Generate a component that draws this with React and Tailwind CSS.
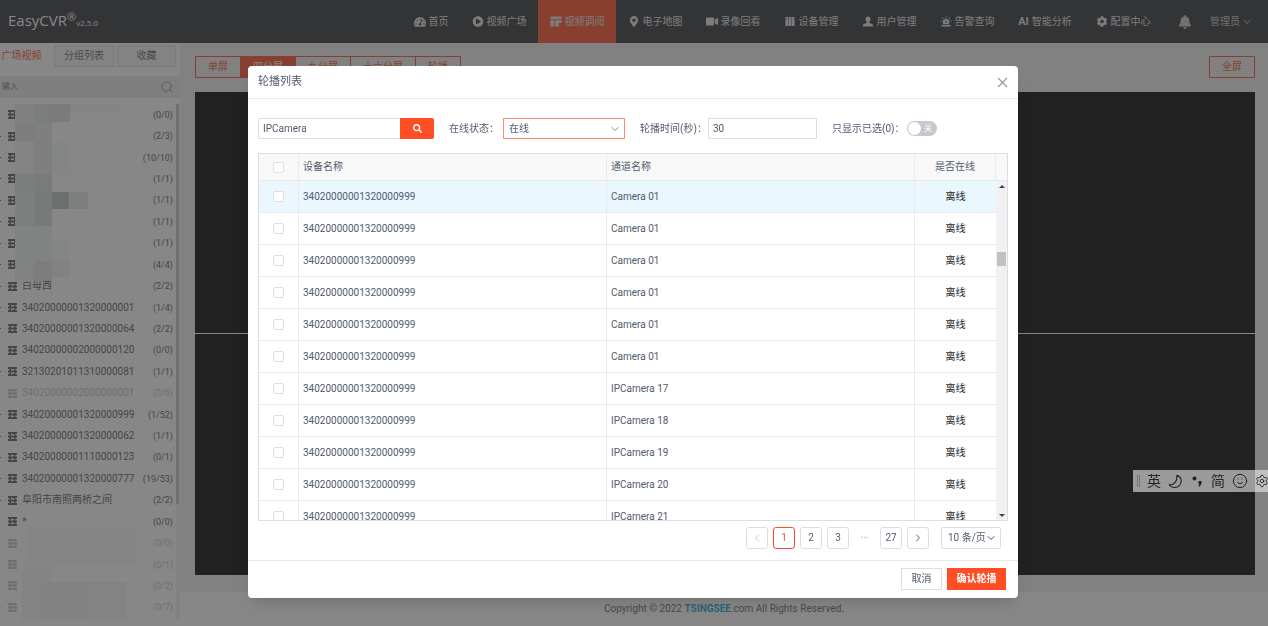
import React, { useState } from 'react';
import { FaTachometerAlt, FaPlayCircle, FaMapMarkerAlt, FaVideo, FaCog, FaBell, FaSearch } from 'react-icons/fa';
import { ChevronDown, ChevronLeft, ChevronRight, Search, X, Smile, Settings } from 'lucide-react';

const LayoutIcon = (props) => (
  <svg viewBox="0 0 12 12" fill="currentColor" {...props}>
    <path d="M0 0.5h12v3H0zM0 4.5h4v7H0zM5 4.5h7v3H9v4H5z" />
  </svg>
);

const DevicesIcon = (props) => (
  <svg viewBox="0 0 12 12" fill="currentColor" {...props}>
    <path d="M1 1h3v10H1zM4.5 1h3v10h-3zM8 1h3v10H8z" />
    <path d="M2 3h1M5.5 3h1M9 3h1" stroke="#2d3035" strokeWidth="1" />
  </svg>
);

const PersonIcon = (props) => (
  <svg viewBox="0 0 12 12" fill="currentColor" {...props}>
    <path d="M6 .5c1.7 0 2.7 1.2 2.7 2.9 0 1.300-.6 2.500-1.400 3.100v.8l3.300 1.300c.6.300.9.800.9 1.400v1.500H.5V10c0-.6.300-1.100.9-1.400l3.300-1.300v-.8C3.900 5.900 3.300 4.700 3.300 3.400 3.300 1.700 4.300.5 6 .5z" />
  </svg>
);

const SirenIcon = (props) => (
  <svg viewBox="0 0 12 12" fill="currentColor" {...props}>
    <path d="M2.500 9V6.500a3.500 3.500 0 0 1 7 0V9zM1 9.800h10v1.700H1zM5.500.5h1v1.700h-1zM1.400 2l.8-.7 1.200 1.200-.7.800zM10.600 2l-.8-.7-1.200 1.200.7.800zM0 5h1.500v1H0zM10.500 5H12v1h-1.500z" />
    <path d="M6 5v2.500" stroke="#2d3035" strokeWidth="1" />
  </svg>
);

const AiIcon = () => <span className="text-[11px] font-bold">AI</span>;

const DeviceIcon = () => (
  <svg viewBox="0 0 9 9" className="h-[9px] w-[9px] shrink-0" fill="currentColor" aria-hidden="true">
    <path d="M0 0h9v2H0zM0 3.500h9v2H0zM0 7h9v2H0zM1.500 0h1.500v9H1.500zM6 0h1.500v9H6z" />
  </svg>
);

const CrescentIcon = () => (
  <svg viewBox="0 0 16 16" className="h-[15px] w-[15px]" fill="none" stroke="currentColor" strokeWidth="1.2" strokeLinejoin="round" aria-hidden="true">
    <path d="M9.500 1.500c3 1 4.800 3.500 4.600 6.500-.3 3.800-3.400 6.500-7 6.400-2.500 0-4.600-1.200-5.800-3 5.200.6 9-3.900 8.200-9.900z" />
  </svg>
);

const PunctuationIcon = () => (
  <svg viewBox="0 0 14 14" className="h-[14px] w-[14px]" fill="currentColor" aria-hidden="true">
    <circle cx="4.500" cy="4.500" r="2" />
    <path d="M8.500 7h3v2.500L9.800 12.500H8.300L9.300 9.700h-.8z" />
  </svg>
);

const navItems = [
  { label: '视频广场', icon: FaPlayCircle },
  { label: '视频调阅', icon: LayoutIcon, active: true },
  { label: '电子地图', icon: FaMapMarkerAlt },
  { label: '录像回看', icon: FaVideo },
  { label: '设备管理', icon: DevicesIcon },
  { label: '用户管理', icon: PersonIcon },
  { label: '告警查询', icon: SirenIcon },
  { label: '智能分析', icon: AiIcon },
  { label: '配置中心', icon: FaCog },
];

const devices = [
  { name: '', count: '0/0', leaf: true },
  { name: '', count: '2/3' },
  { name: '', count: '10/10' },
  { name: '', count: '1/1' },
  { name: '', count: '1/1' },
  { name: '', count: '1/1' },
  { name: '', count: '1/1' },
  { name: '', count: '4/4' },
  { name: '白母西', count: '2/2' },
  { name: '34020000001320000001', count: '1/4' },
  { name: '34020000001320000064', count: '2/2' },
  { name: '34020000002000000120', count: '0/0', leaf: true },
  { name: '32130201011310000081', count: '1/1' },
  { name: '34020000002000000001', count: '0/6', offline: true },
  { name: '34020000001320000999', count: '1/52' },
  { name: '34020000001320000062', count: '1/1' },
  { name: '34020000001110000123', count: '0/1' },
  { name: '34020000001320000777', count: '19/53' },
  { name: '阜阳市南照两桥之间', count: '2/2' },
  { name: '*', count: '0/0', leaf: true },
  { name: '', count: '0/0', offline: true, leaf: true },
  { name: '', count: '0/1', offline: true },
  { name: '', count: '0/2', offline: true },
  { name: '', count: '0/7', offline: true },
];

// x, y, width, height, colour of each masked block over the device names
const maskBlocks = [
  [15, 0, 20, 20, '#eaeded'],
  [35, 0, 17, 20, '#e2e5e5'],
  [52, 0, 18, 18, '#dde3e2'],
  [70, 0, 50, 8, '#f6f6f6'],
  [15, 20, 19, 17, '#e5e7e7'],
  [34, 20, 18, 50, '#e9ebeb'],
  [15, 37, 19, 33, '#f4f6f6'],
  [52, 37, 18, 33, '#f8f9f9'],
  [15, 70, 20, 18, '#dfe5e4'],
  [35, 70, 17, 18, '#dbe2e1'],
  [15, 88, 20, 34, '#e1eae9'],
  [35, 88, 17, 34, '#dadddd'],
  [52, 88, 17, 17, '#bdc3c2'],
  [69, 88, 19, 17, '#e9edec'],
  [15, 122, 37, 35, '#f0f4f3'],
  [52, 135, 18, 22, '#f8f9f9'],
  [15, 157, 20, 20, '#eef0f0'],
  [35, 157, 17, 20, '#e5e6e6'],
  [52, 157, 18, 16, '#f1f2f2'],
  [28, 424, 108, 36, '#f9f9f9'],
  [22, 462, 30, 16, '#f7f7f7'],
  [22, 478, 105, 38, '#f6f6f6'],
  [40, 478, 48, 38, '#f2f2f2'],
];

const channels = [
  'Camera 01',
  'Camera 01',
  'Camera 01',
  'Camera 01',
  'Camera 01',
  'Camera 01',
  'IPCamera 17',
  'IPCamera 18',
  'IPCamera 19',
  'IPCamera 20',
  'IPCamera 21',
];

const Header = () => (
  <header className="flex h-[43px] items-center justify-between bg-[#2d3035] pl-2 pr-[15px] text-[#e4e4e4]">
    <div className="flex items-baseline font-['Open_Sans',sans-serif] text-white">
      <span className="text-[15px]">EasyCVR</span>
      <sup className="text-[11px]">®</sup>
      <span className="text-[8px]">v2.5.0</span>
    </div>
    <div className="flex h-full items-center">
      <nav className="flex h-full">
        <a href="#home" className="flex h-full w-[58px] items-center justify-center gap-[3px]">
          <FaTachometerAlt className="h-3 w-3" />
          首页
        </a>
        {navItems.map(({ label, icon: Icon, active }) => (
          <a
            key={label}
            href={`#${label}`}
            className={`flex h-full w-[78px] items-center justify-center gap-[3px] whitespace-nowrap ${active ? 'bg-[#ff4e24]' : ''}`}
          >
            <Icon className="h-[11px] w-3" />
            {label}
          </a>
        ))}
      </nav>
      <button aria-label="通知" className="ml-4 text-[#c8c8c8]">
        <FaBell className="h-[14px] w-[14px]" />
      </button>
      <button className="ml-[18px] flex items-center gap-px text-[#c8c8c8]">
        管理员
        <ChevronDown className="h-3 w-3" />
      </button>
    </div>
  </header>
);

const Sidebar = () => (
  <aside className="flex w-[180px] shrink-0 flex-col bg-white">
    <div className="flex h-[33px] items-start gap-[3px] pt-[2px]">
      <button className="h-[22px] w-[51px] whitespace-nowrap pr-2 text-[#ff4e24]">广场视频</button>
      <button className="h-[22px] w-[60px] border border-[#dcdcdc] bg-[#f5f5f5] text-[#666]">分组列表</button>
      <button className="h-[22px] w-[59px] border border-[#dcdcdc] bg-[#f5f5f5] text-[#666]">收藏</button>
    </div>
    <label className="flex h-[22px] items-center bg-[#eaeaea] pl-[2px] pr-[6px]">
      <input placeholder="输入" aria-label="输入" className="w-full min-w-0 flex-1 bg-transparent text-[8px] outline-none placeholder:text-[#777]" />
      <Search className="h-[14px] w-[14px] text-[#888]" strokeWidth={1.5} />
    </label>
    <div className="relative mt-[6px] flex flex-1 pb-2">
      <ul className="flex min-w-0 flex-1 flex-col">
        {devices.map((device, i) => (
          <li
            key={i}
            className={`flex flex-1 items-center pr-[3px] ${device.offline ? 'text-[#c2c4c8]' : 'text-[#555a62]'}`}
          >
            <span className={`mr-[7px] h-px w-px shrink-0 ${device.leaf ? '' : 'bg-current'}`} />
            <DeviceIcon />
            <span className="ml-[5px] flex-1 whitespace-nowrap">{device.name}</span>
            <span className="text-[9px]">({device.count})</span>
          </li>
        ))}
      </ul>
      <div className="w-1 bg-[#f0f0f0]">
        <div className="h-[400px] w-[3px] bg-[#c4c4c4]" />
      </div>
      <svg className="pointer-events-none absolute left-0 top-0 h-[516px] w-[176px]" aria-hidden="true">
        {maskBlocks.map(([x, y, w, h, fill], i) => (
          <rect key={i} x={x} y={y} width={w} height={h} fill={fill} />
        ))}
      </svg>
    </div>
  </aside>
);

const Wall = () => {
  const layouts = ['单屏', '四分屏', '九分屏', '十六分屏', '轮播'];
  return (
    <main className="flex min-w-0 flex-1 flex-col bg-[#f0f0f0]">
      <div className="flex flex-1 flex-col pb-[17px] pl-[15px] pr-[13px] pt-[13px]">
        <div className="flex h-[22px] justify-between text-[#ff4e24]">
          <div className="flex">
            {layouts.map((name, i) => (
              <button
                key={name}
                className={`border-y border-r border-[#ff4e24] px-[12px] first:border-l ${i === 1 ? 'bg-[#ff4e24] text-white' : ''}`}
              >
                {name}
              </button>
            ))}
          </div>
          <button className="border border-[#ff4e24] px-3">全屏</button>
        </div>
        <div className="mt-[14px] grid flex-1 grid-cols-2 grid-rows-2 gap-px bg-white">
          <div className="bg-black" />
          <div className="bg-black" />
          <div className="bg-black" />
          <div className="bg-black" />
        </div>
      </div>
      <footer className="h-[34px] bg-white text-center leading-[33px] text-[#666]">
        Copyright © 2022 <a href="#tsingsee" className="font-bold text-[#18a8d8]">TSINGSEE</a>.com All Rights Reserved.
      </footer>
    </main>
  );
};

const Checkbox = (props) => (
  <input
    type="checkbox"
    className="mx-auto block h-[11px] w-[11px] appearance-none rounded-[2px] border border-[#dcdee2] bg-white checked:bg-[#ff4e24]"
    {...props}
  />
);

const ChannelTable = () => (
  <div className="mt-[14px] flex h-[368px] border border-[#dcdee2]">
    <div className="min-w-0 flex-1 overflow-y-auto [scrollbar-width:none]">
      <table className="w-full table-fixed border-separate border-spacing-0 text-left">
        <colgroup>
          <col className="w-[40px]" />
          <col />
          <col />
          <col className="w-[81px]" />
        </colgroup>
        <thead className="sticky top-0 z-10 bg-[#f8f8f9]">
          <tr className="h-[27px] [&>th]:border-b [&>th]:border-r [&>th]:border-[#e8eaec] [&>th]:font-normal">
            <th><Checkbox aria-label="全选" /></th>
            <th className="pl-1">设备名称</th>
            <th className="pl-1">通道名称</th>
            <th className="text-center">是否在线</th>
          </tr>
        </thead>
        <tbody>
          {channels.map((channel, i) => (
            <tr
              key={i}
              className={`h-8 [&>td]:border-b [&>td]:border-[#e8eaec] [&>td:not(:last-child)]:border-r ${i === 0 ? 'bg-[#ebf7ff]' : 'bg-white'}`}
            >
              <td><Checkbox aria-label={`选择 ${channel}`} /></td>
              <td className="pl-1">34020000001320000999</td>
              <td className="pl-1">{channel}</td>
              <td className="text-center text-[#222]">离线</td>
            </tr>
          ))}
        </tbody>
      </table>
    </div>
    <div className="flex w-[11px] flex-col items-center bg-[#f1f1f3]">
      <div className="h-[27px] w-full border-b border-[#e8eaec] bg-[#f8f8f9]" />
      <div className="mt-1 h-0 w-0 border-x-[3px] border-b-[3px] border-x-transparent border-b-[#444]" />
      <div className="mt-[64px] h-[14px] w-[9px] bg-[#c1c1c4]" />
      <div className="mb-[3px] mt-auto h-0 w-0 border-x-[3px] border-t-[3px] border-x-transparent border-t-[#444]" />
    </div>
  </div>
);

const Pagination = () => {
  const box = 'flex h-[22px] w-[22px] items-center justify-center rounded-[3px] border';
  return (
    <div className="mt-[6px] flex items-center justify-end gap-[5px] pr-[7px]">
      <button aria-label="上一页" disabled className={`${box} border-[#dcdee2] text-[#c5c8ce]`}>
        <ChevronLeft className="h-3 w-3" />
      </button>
      <button className={`${box} border-[#ff4e24] text-[#ff4e24]`}>1</button>
      <button className={`${box} border-[#dcdee2]`}>2</button>
      <button className={`${box} border-[#dcdee2]`}>3</button>
      <span className="w-[21px] text-center text-[8px] text-[#c5c8ce]">•••</span>
      <button className={`${box} border-[#dcdee2]`}>27</button>
      <button aria-label="下一页" className={`${box} border-[#dcdee2]`}>
        <ChevronRight className="h-3 w-3" />
      </button>
      <div className="relative ml-[7px]">
        <select aria-label="每页条数" className="h-[22px] w-[60px] appearance-none rounded-[2px] border border-[#dcdee2] bg-white pl-[6px]">
          <option>10 条/页</option>
          <option>20 条/页</option>
        </select>
        <ChevronDown className="pointer-events-none absolute right-1 top-[5px] h-3 w-3" />
      </div>
    </div>
  );
};

const PollingDialog = () => {
  const [keyword, setKeyword] = useState('IPCamera');
  const [seconds, setSeconds] = useState('30');
  const [onlySelected, setOnlySelected] = useState(false);

  return (
    <div className="fixed inset-0 flex items-start justify-center bg-[rgba(55,55,55,0.6)] pr-[2px] pt-[66px]">
      <section
        role="dialog"
        aria-labelledby="dialog-title"
        className="w-full max-w-[770px] rounded-[4px] bg-white text-[#515a6e] shadow-lg"
      >
        <div className="flex h-[33px] items-center justify-between border-b border-[#e8eaec] pl-[10px] pr-[7px]">
          <h2 id="dialog-title" className="text-[11px]">轮播列表</h2>
          <button aria-label="关闭" className="text-[#999]">
            <X className="h-[17px] w-[17px]" strokeWidth={1.5} />
          </button>
        </div>

        <div className="px-[10px] pb-[11px] pt-[19px]">
          <div className="flex h-[21px] items-center">
            <div className="flex h-full">
              <input
                aria-label="设备名称"
                value={keyword}
                onChange={(e) => setKeyword(e.target.value)}
                className="w-[142px] rounded-l-[2px] border border-r-0 border-[#dcdee2] px-1 outline-none"
              />
              <button aria-label="搜索" className="flex w-[34px] items-center justify-center rounded-r-[2px] bg-[#ff4e24] text-white">
                <FaSearch className="h-[9px] w-[9px]" />
              </button>
            </div>
            <label htmlFor="status" className="ml-[15px] w-[54px] whitespace-nowrap">在线状态：</label>
            <div className="relative h-full">
              <select id="status" className="h-full w-[122px] appearance-none border border-[#ff8a70] bg-white pl-[5px] outline-none">
                <option>在线</option>
                <option>离线</option>
              </select>
              <ChevronDown className="pointer-events-none absolute right-1 top-[5px] h-3 w-3 text-[#808695]" />
            </div>
            <label htmlFor="seconds" className="ml-[15px] w-[68px] whitespace-nowrap">轮播时间(秒)：</label>
            <input
              id="seconds"
              value={seconds}
              onChange={(e) => setSeconds(e.target.value)}
              className="h-full w-[109px] border border-[#dcdee2] px-1 outline-none"
            />
            <label htmlFor="only-selected" className="ml-[15px] w-[75px] whitespace-nowrap">只显示已选(0)：</label>
            <button
              id="only-selected"
              role="switch"
              aria-checked={onlySelected}
              onClick={() => setOnlySelected(!onlySelected)}
              className={`flex h-[15px] w-[30px] items-center justify-between rounded-full pl-px pr-[5px] text-[8px] text-white ${
                onlySelected ? 'flex-row-reverse bg-[#ff4e24]' : 'bg-[#c5c8ce]'
              }`}
            >
              <span className="h-[13px] w-[13px] rounded-full bg-white" />
              {onlySelected ? '开' : '关'}
            </button>
          </div>
          <ChannelTable />
          <Pagination />
        </div>

        <div className="flex justify-end gap-[5px] border-t border-[#e8eaec] px-3 pb-2 pt-[7px]">
          <button className="h-[22px] w-[41px] border border-[#dcdee2]">取消</button>
          <button className="h-[22px] w-[59px] bg-[#ff4e24] font-bold text-white">确认轮播</button>
        </div>
      </section>
    </div>
  );
};

// Floating input-method bar, docked to the right edge
const ImeBar = () => (
  <div className="fixed right-0 top-[470px] flex h-[22px] items-center gap-[7px] overflow-hidden bg-[rgba(231,231,236,0.62)] pl-1 text-[14px] text-[#222]">
    <span className="h-3 w-[3px] border-x border-[#777]" />
    <span>英</span>
    <CrescentIcon />
    <PunctuationIcon />
    <span>简</span>
    <Smile className="h-4 w-4" strokeWidth={1.5} />
    <Settings className="-mr-px h-[14px] w-[14px]" strokeWidth={1.5} />
  </div>
);

const App = () => (
  <div className="flex min-h-screen flex-col bg-white font-[Roboto,'Noto_Sans_CJK_SC',sans-serif] text-[10px] leading-[14px]">
    <Header />
    <div className="flex flex-1">
      <Sidebar />
      <Wall />
    </div>
    <PollingDialog />
    <ImeBar />
  </div>
);

export default App;
